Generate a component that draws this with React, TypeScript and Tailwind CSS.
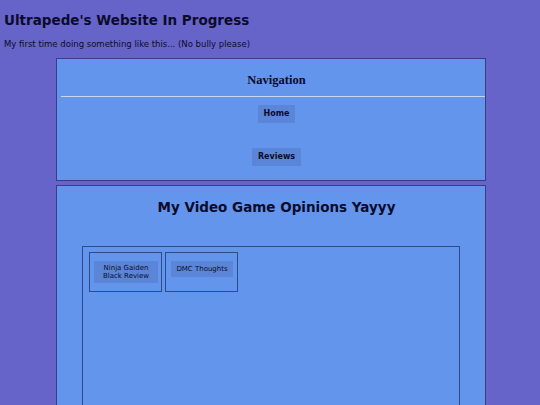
export default function App() {
  return (
    <div className="min-h-[405px] bg-[#6664c9] text-[#0b0b2a] overflow-hidden" style={{ fontFamily: '"DejaVu Sans", Verdana, sans-serif' }}>
      <header className="px-[4px] pt-[12px]">
        <h1 className="text-[13.5px] font-bold leading-[17px]">Ultrapede's Website In Progress</h1>
        <p className="mt-[10px] text-[8.5px] leading-[11px]">My first time doing something like this... (No bully please)</p>
      </header>

      <div className="ml-[56px] mt-[8px] w-[430px]">
        <nav className="h-[123px] border border-[#3b3b86] bg-[#6495ed]">
          <h2 className="pl-[11px] pt-[14px] text-center text-[12.5px] font-bold leading-[14px]" style={{ fontFamily: '"Liberation Serif", Georgia, serif' }}>
            Navigation
          </h2>
          <hr className="ml-[4px] mt-[9px] border-0 border-t border-[#c9d6f4]" />
          <div className="flex flex-col items-center pl-[11px]">
            <a className="mt-[8px] bg-[#5b86d8] px-[6px] py-[3px] text-[8px] font-bold leading-[12px]">Home</a>
            <a className="mt-[25px] bg-[#5b86d8] px-[6px] py-[3px] text-[8px] font-bold leading-[12px]">Reviews</a>
          </div>
        </nav>

        <main className="mt-[4px] h-[230px] border border-[#3b3b86] bg-[#6495ed]">
          <h2 className="pl-[11px] pt-[13px] text-center text-[13.5px] font-bold leading-[17px]">My Video Game Opinions Yayyy</h2>
          <div className="ml-[25px] mt-[30px] h-[200px] w-[378px] border border-[#2f4a8a]">
            <div className="flex gap-[3px] pl-[6px] pt-[5px]">
              <div className="h-[40px] w-[73px] border border-[#2f4a8a] pl-[4px] pt-[8px]">
                <div className="w-[64px] bg-[#5b86d8] py-[3px] text-center text-[7px] leading-[8px]">
                  Ninja Gaiden<br />Black Review
                </div>
              </div>
              <div className="h-[40px] w-[73px] border border-[#2f4a8a] pl-[5px] pt-[8px]">
                <div className="w-[62px] bg-[#5b86d8] py-[4px] text-center text-[7px] leading-[8px]">
                  DMC Thoughts
                </div>
              </div>
            </div>
          </div>
        </main>
      </div>
    </div>
  );
}
